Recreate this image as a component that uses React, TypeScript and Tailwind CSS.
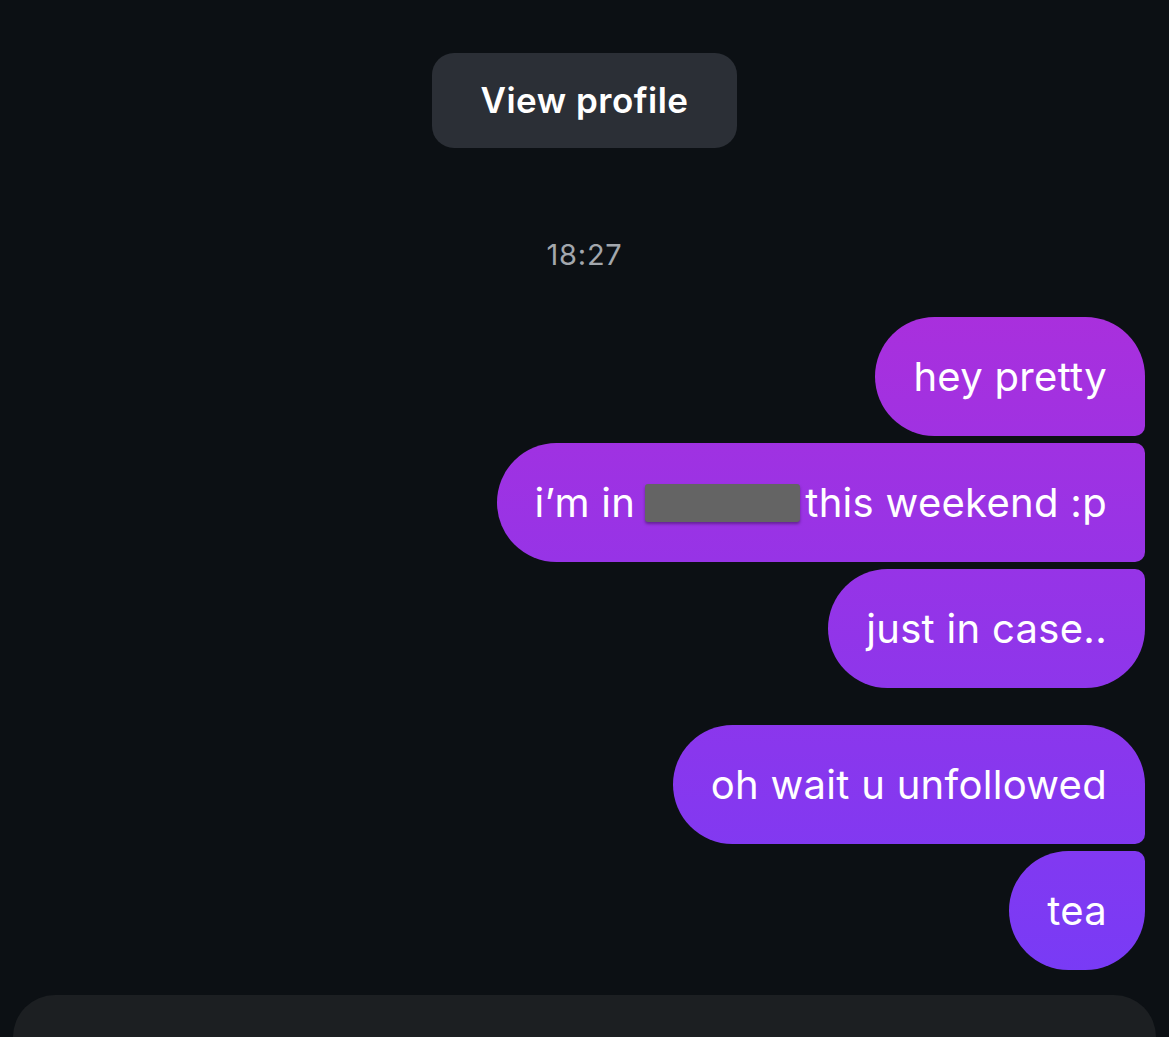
const bubble =
  "h-[119px] flex items-center px-[38px] text-[40px] tracking-[0.3px] text-white bg-fixed bg-[linear-gradient(180deg,#c02ad1_0%,#743cf8_100%)]";

type Msg = {
  id: number;
  text: React.ReactNode;
  shape: string;
};

const messages: Msg[] = [
  { id: 1, text: "hey pretty", shape: "rounded-[60px] rounded-br-[10px]" },
  {
    id: 2,
    text: (
      <>
        i’m in
        <span className="inline-block w-[155px] h-[38px] ml-[10px] mr-[5px] bg-[#646464] rounded-[3px] shadow-[0_2px_3px_rgba(0,0,0,0.35)] align-middle" />
        this weekend :p
      </>
    ),
    shape: "rounded-l-[60px] rounded-r-[10px]",
  },
  { id: 3, text: "just in case..", shape: "rounded-[60px] rounded-tr-[10px]" },
];

const messages2: Msg[] = [
  { id: 4, text: "oh wait u unfollowed", shape: "rounded-[60px] rounded-br-[10px]" },
  { id: 5, text: "tea", shape: "rounded-[60px] rounded-tr-[10px]" },
];

export default function App() {
  return (
    <div className="w-[1169px] h-[1037px] overflow-hidden bg-[#0c1014] font-['Inter',sans-serif] flex flex-col">
      <div className="flex justify-center pt-[53px]">
        <button
          type="button"
          className="w-[305px] h-[95px] rounded-[22px] bg-[#2b2f36] text-white text-[35px] tracking-[0.5px] font-semibold"
        >
          View profile
        </button>
      </div>

      <div className="text-center text-[29px] tracking-[0.8px] text-[#a3a7ad] mt-[90px] leading-[34px]">18:27</div>

      <div className="flex flex-col items-end gap-[7px] pr-[24px] mt-[45px]">
        {messages.map((m) => (
          <div key={m.id} className={`${bubble} ${m.shape}`}>
            <span className="flex items-center">{m.text}</span>
          </div>
        ))}
      </div>

      <div className="flex flex-col items-end gap-[7px] pr-[24px] mt-[37px]">
        {messages2.map((m) => (
          <div key={m.id} className={`${bubble} ${m.shape}`}>
            {m.text}
          </div>
        ))}
      </div>

      <div className="mt-[25px] mx-[13px] flex-1 rounded-t-[60px] bg-[#1c1f22]" />
    </div>
  );
}
